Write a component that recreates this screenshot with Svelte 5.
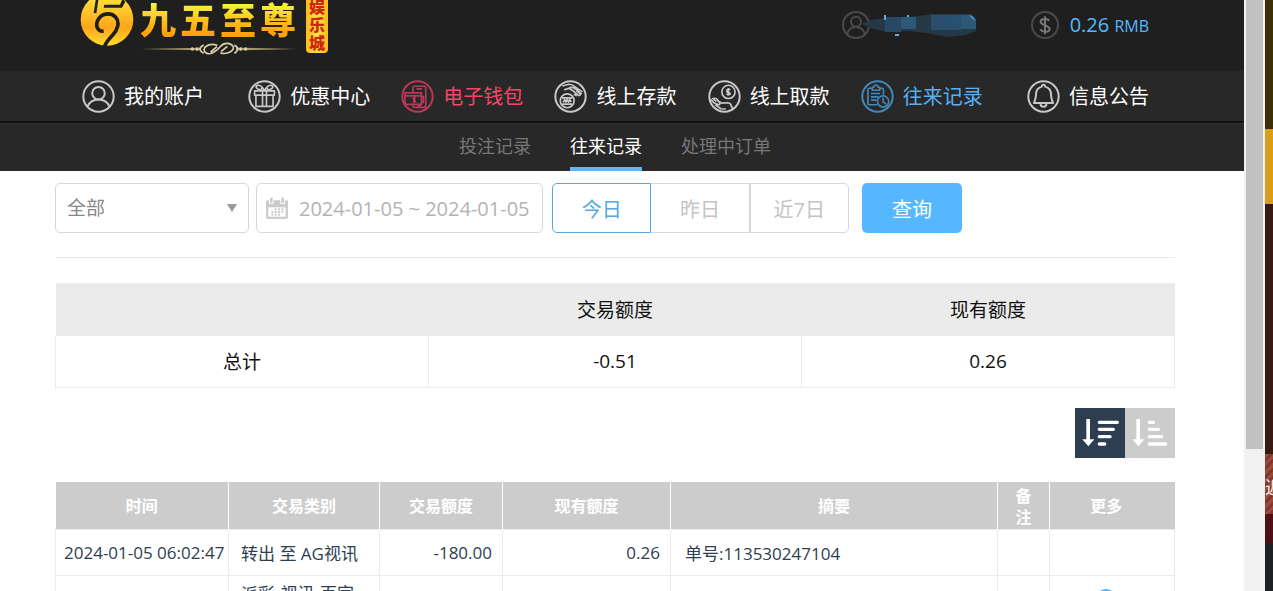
<script>
  const menu = [
    { icon: 'user', label: '我的账户' },
    { icon: 'gift', label: '优惠中心' },
    { icon: 'wallet', label: '电子钱包', tone: 'hot' },
    { icon: 'deposit', label: '线上存款' },
    { icon: 'withdraw', label: '线上取款' },
    { icon: 'records', label: '往来记录', tone: 'current' },
    { icon: 'bell', label: '信息公告' }
  ];
  const tabs = ['投注记录', '往来记录', '处理中订单'];
  const ranges = ['今日', '昨日', '近7日'];
  let tab = $state(1);
  let range = $state(0);
  let descending = $state(true);
  let period = $state('2024-01-05 ~ 2024-01-05');
</script>

{#snippet glyph(name)}
  <svg class="glyph" viewBox="0 0 100 100" aria-hidden="true">
    <circle cx="50" cy="50" r="46" />
    {#if name === 'user'}
      <circle cx="50" cy="40" r="19" />
      <path d="M16 81C23 65 34 59 50 59S77 65 84 81" />
    {:else if name === 'gift'}
      <g class="thin">
        <path d="M20 33H80V46H20ZM24 46V80H76V46M44 33V80M56 33V80M50 32C40 31 27 29 25 22S35 14 41 20 49 28 50 32C60 31 73 29 75 22S65 14 59 20 51 28 50 32M43 25L34 33M57 25L66 33" />
      </g>
    {:else if name === 'wallet'}
      <g class="thin">
        <path d="M36 38V24Q36 19 41 19H69Q75 19 75 25V77Q75 83 69 83H42Q36 83 36 77V74M47 27H64M12 39H62V74H17Q12 74 12 69ZM12 48H62M62 50H68V68H62" />
        <path d="M45 53Q36 52 37 57T42 62Q46 66 36 67M41 50V70M50 78H61" />
      </g>
    {:else if name === 'deposit'}
      <g class="thin">
        <path d="M25 18L45 13Q55 13 64 21L86 36M31 30L45 25 61 35 72 45Q78 50 80 43L68 32M60 43L69 48M45 25Q56 18 66 28L84 43" />
        <circle cx="40" cy="63" r="21" />
        <path d="M24 54H56M25 73H55M28 68L32 59 36 67 40 59 44 67 48 59 52 67" />
      </g>
    {:else if name === 'withdraw'}
      <g class="thin">
        <circle cx="62" cy="36" r="20" />
        <path d="M68 29Q56 26 57 33T62 37Q72 42 64 44 60 45 56 42M62 24V48M7 58L19 70 32 75Q38 75 35 68L27 60M13 55L25 65M18 56Q25 53 32 64L42 70 60 69Q70 70 70 78L76 88M22 75L39 87 54 88" />
      </g>
    {:else if name === 'records'}
      <g class="thin">
        <path d="M34 25H25Q21 25 21 30V71Q21 75 25 75H50M57 25H64Q68 25 68 30V45M34 22H39Q39 15 45 15T52 22H57V31H34ZM30 41H58M30 51H53M30 61H47" />
        <circle cx="67" cy="65" r="17" />
        <path d="M67 54V66L76 73" />
      </g>
    {:else}
      <path d="M50 14Q55 14 55 20C69 23 73 34 73 46 73 58 77 63 79 70H21C23 63 27 58 27 46 27 34 31 23 45 20Q45 14 50 14ZM41 71Q41 81 50 81T59 71" />
    {/if}
  </svg>
{/snippet}

<div class="shell">
  <div class="page">
    <header>
      <a class="logo" href="#home" aria-label="九五至尊娱乐城">
        <svg class="disc" viewBox="30 -22 162 158" aria-hidden="true">
          <defs>
            <linearGradient id="gold" x1="0" y1="0" x2="0" y2="1">
              <stop offset="0" stop-color="#ffe93c" />
              <stop offset=".65" stop-color="#ffa51a" />
              <stop offset="1" stop-color="#ffe02c" />
            </linearGradient>
          </defs>
          <circle cx="111" cy="57" r="79" fill="url(#gold)" />
          <path d="M84-20L75 38" fill="none" stroke="#1f1f1f" stroke-width="8" />
          <path d="M103 13H150L158-6L166 4L156 22H101Z" fill="#1f1f1f" />
          <path d="M101 92C83 94 75 76 84 58 94 39 120 34 136 49 151 65 143 88 127 105 116 117 108 125 104 138" fill="none" stroke="#1f1f1f" stroke-width="11" />
        </svg>
        <span class="wordmark">
          <span class="chars"><b>九</b><b>五</b><b>至</b><b>尊</b></span>
          <svg class="flourish" viewBox="0 0 465 40" aria-hidden="true">
            <path d="M0 20L180 16V24ZM465 20L285 16V24Z" fill="#a69a6b" />
            <g fill="none" stroke="#d8cfaa" stroke-width="5">
              <path d="M188 8Q166 20 188 33M280 8Q300 20 280 33M229 9C200 0 181 18 193 30S229 25 239 12 270 1 276 12 263 38 238 32M209 29L228 13M240 28L259 12" />
            </g>
            <g fill="#d8cfaa"><circle cx="154" cy="20" r="5" /><circle cx="168" cy="20" r="5" /><circle cx="299" cy="20" r="5" /><circle cx="314" cy="20" r="5" /></g>
          </svg>
        </span>
        <span class="seal"><b>娱</b><b>乐</b><b>城</b></span>
      </a>
      <div class="account">
        <svg class="small" viewBox="0 0 84 84" aria-hidden="true">
          <circle cx="42" cy="42" r="39" /><circle cx="42" cy="32" r="15" /><path d="M15 69Q22 48 42 48T69 69" />
        </svg>
        <svg class="mask" viewBox="0 0 106 28" aria-hidden="true">
          <path d="M-8 13L0 9 18 7 49 5 62 3H102L106 7V20L96 24 78 26 56 22 40 20 18 21 0 17Z" fill="#253845" />
          <path d="M15 6H31V21H15Z" fill="#284961" /><path d="M31 6H46V18H31Z" fill="#2e5878" />
          <path d="M61 4H76V19H61Z" fill="#2c4d6b" /><path d="M76 4H91V19H76Z" fill="#285070" /><path d="M91 4H100L106 9V18H91Z" fill="#2c5777" />
          <path d="M14 4H16V9H14ZM37 4H39V6H37ZM25 23H29V25H25ZM99 4Q104 5 105 10" fill="#5aaeea" />
        </svg>
        <svg class="small coin" viewBox="0 0 84 84" aria-hidden="true">
          <circle cx="42" cy="42" r="39" /><path class="dollar" d="M55 29C50 22 29 21 29 32S56 43 56 54 34 65 28 55M42 16V70" />
        </svg>
        <span class="balance">0.26 <small>RMB</small></span>
      </div>
    </header>

    <nav class="menu" aria-label="主菜单">
      {#each menu as item}
        <a class={item.tone} href="#{item.icon}">{@render glyph(item.icon)}<span>{item.label}</span></a>
      {/each}
    </nav>

    <nav class="tabs" aria-label="记录">
      {#each tabs as label, i}
        <button class:active={tab === i} onclick={() => (tab = i)}>{label}</button>
      {/each}
    </nav>

    <main>
      <form class="filters" onsubmit={(e) => e.preventDefault()}>
        <div class="field kind">
          <select aria-label="交易类别"><option>全部</option></select>
          <svg viewBox="0 0 10 8" aria-hidden="true"><path d="M0 0H10L5 8Z" fill="#999" /></svg>
        </div>
        <label class="field date">
          <svg viewBox="0 0 66 66" aria-hidden="true">
            <path d="M4 10H62Q66 10 66 14V26H0V14Q0 10 4 10ZM0 26H66V61Q66 66 61 66H5Q0 66 0 61Z" fill="#ccc" />
            <path d="M7 31H59V59H7Z" fill="#fff" />
            <path d="M9 0H23V20H9ZM43 0H57V20H43Z" fill="#fff" />
            <path d="M12 2H20V17H12ZM46 2H54V17H46Z" fill="#ccc" />
            <path d="M26 34h6v6h-6zM36 34h6v6h-6zM46 34h6v6h-6zM16 42h6v6h-6zM26 42h6v6h-6zM36 42h6v6h-6zM46 42h6v6h-6zM16 50h6v6h-6zM26 50h6v6h-6zM36 50h6v6h-6z" fill="#ccc" />
          </svg>
          <input type="text" aria-label="日期" bind:value={period} />
        </label>
        <div class="ranges">
          {#each ranges as label, i}
            <button type="button" class:active={range === i} onclick={() => (range = i)}>{label}</button>
          {/each}
        </div>
        <button class="query">查询</button>
      </form>

      <table class="summary">
        <thead><tr><th></th><th>交易额度</th><th>现有额度</th></tr></thead>
        <tbody><tr><td>总计</td><td>-0.51</td><td>0.26</td></tr></tbody>
      </table>

      <div class="sort">
        <button class:active={descending} aria-label="降序" onclick={() => (descending = true)}>
          <svg viewBox="0 0 150 150" aria-hidden="true"><path d="M34 33H45V94H58L40 115 22 94H34Z" /><path class="bars" d="M73 43H127M73 64H115M73 86H105M73 108H89" /></svg>
        </button>
        <button class:active={!descending} aria-label="升序" onclick={() => (descending = false)}>
          <svg viewBox="0 0 150 150" aria-hidden="true"><path d="M34 33H45V94H58L40 115 22 94H34Z" /><path class="bars" d="M73 43H85M73 64H100M73 86H110M73 108H122" /></svg>
        </button>
      </div>

      <table class="records">
        <colgroup><col class="w-time" /><col class="w-type" /><col class="w-amount" /><col class="w-balance" /><col /><col class="w-note" /><col class="w-more" /></colgroup>
        <thead>
          <tr><th>时间</th><th>交易类别</th><th>交易额度</th><th>现有额度</th><th>摘要</th><th>备<br />注</th><th class="more">更多</th></tr>
        </thead>
        <tbody>
          <tr><td class="time">2024-01-05 06:02:47</td><td class="type">转出 至 AG视讯</td><td class="num">-180.00</td><td class="num">0.26</td><td class="digest">单号:113530247104</td><td></td><td></td></tr>
          <tr class="next"><td></td><td class="type">派彩-视讯-百家</td><td></td><td></td><td></td><td></td>
            <td class="more"><svg viewBox="0 0 20 20" aria-hidden="true"><circle cx="10" cy="10" r="9" fill="none" stroke="#55b8ff" stroke-width="2" /></svg></td></tr>
        </tbody>
      </table>
    </main>
  </div>
  <div class="scrollbar"><div class="thumb"></div></div>
  <aside><div class="olive"></div><div class="amber"></div><div class="brown"></div><div class="ribbon">返</div><div class="wine"></div></aside>
</div>

<style>
  :global(body) { margin: 0; overflow: hidden; }
  .shell { display: flex; height: 100vh; overflow: hidden; background: #fff; font-family: "Open Sans", "Noto Sans CJK SC", sans-serif; font-size: 16px; }
  .shell * { box-sizing: border-box; }
  button, input, select { font: inherit; margin: 0; padding: 0; border: 0; background: none; }
  button { cursor: pointer; }
  svg { display: block; flex: none; }
  a { text-decoration: none; color: inherit; }
  .page { flex: 1; min-width: 0; overflow: hidden; }

  header { display: flex; justify-content: space-between; align-items: flex-end; height: 71px; padding: 0 95px 0 80px; overflow: hidden; background: #1f1f1f; }
  .logo { display: flex; align-items: flex-end; padding-bottom: 15px; }
  .disc { width: 54px; height: 53px; margin-bottom: 10px; }
  .wordmark { display: flex; flex-direction: column; align-items: center; margin-left: 6px; }
  .chars { display: flex; gap: 4px; font-family: "Noto Sans CJK SC", sans-serif; font-size: 36px; line-height: 48px; }
  .chars b { font-weight: 900; color: transparent; background: linear-gradient(#f4f53a 20%, #ffb414 65%, #ff9f10 85%); -webkit-background-clip: text; background-clip: text; }
  .flourish { width: 155px; height: 14px; }
  .seal { display: flex; flex-direction: column; width: 22px; margin: 0 0 3px 10px; padding: 2px; border-radius: 4px; background: linear-gradient(90deg, #ffb81c, #ffe640 50%, #ffb81c); color: #cf2410; font: 900 16px/18px "Noto Sans CJK SC", sans-serif; text-align: center; }
  .account { display: flex; align-items: center; align-self: flex-start; height: 49px; color: #55b8ff; }
  .small { width: 28px; height: 28px; fill: none; stroke: #4a4a4a; stroke-width: 6; }
  .dollar { stroke: #777; }
  .mask { width: 106px; height: 28px; overflow: visible; }
  .coin { margin: 0 11px 0 55px; }
  .balance { font-size: 20px; }
  .balance small { font-size: 16px; }

  .menu { display: flex; justify-content: space-between; align-items: center; height: 52px; padding: 0 95px 0 82px; background: #282828; border-bottom: 2px solid #111; color: #fff; font-size: 20px; }
  .menu a { display: flex; align-items: center; gap: 9px; line-height: 30px; }
  .menu a:first-child { margin-right: 13px; }
  .menu a:last-child { margin-left: 13px; }
  .menu span { padding-top: 2px; }
  .glyph { width: 33px; height: 33px; fill: none; stroke: #c8c8c8; stroke-width: 6; stroke-linejoin: round; }
  .thin { stroke-width: 5; }
  .menu .hot { color: #fb4368; }
  .hot .glyph { stroke: #b8395a; }
  .menu .current { color: #55b0f5; }
  .current .glyph { stroke: #4288bb; }

  .tabs { display: flex; justify-content: center; gap: 39px; height: 48px; padding: 0 69px 0 55px; background: #282828; border-top: 1px solid #333; }
  .tabs button { border-bottom: 4px solid transparent; color: #777; font-size: 18px; line-height: 40px; }
  .tabs .active { color: #fff; border-color: #63b6f5; }

  main { padding: 12px 69px 0 55px; }
  .filters { display: flex; height: 75px; border-bottom: 1px solid #e8e8e8; font-size: 20px; }
  .filters > * { height: 50px; }
  .field { display: flex; align-items: center; border: 1px solid #d8d8d8; border-radius: 5px; color: #aaa; }
  .kind { width: 194px; margin-right: 7px; padding: 0 11px; color: #888; font-size: 19px; }
  .kind select { flex: 1; height: 48px; appearance: none; color: inherit; }
  .kind svg { width: 10px; height: 8px; }
  .date { width: 287px; margin-right: 9px; padding: 0 9px; gap: 11px; }
  .date svg { width: 22px; height: 22px; }
  .date input { flex: 1; min-width: 0; width: 0; color: #b3b3b3; }
  .ranges { display: flex; width: 297px; margin-right: 13px; }
  .ranges button { flex: 1; border: 1px solid #d8d8d8; color: #c4c4c4; }
  .ranges button + button { border-left-width: 0; }
  .ranges button:last-child { border-left-width: 1px; border-radius: 0 5px 5px 0; }
  .ranges button:first-child { border-radius: 5px 0 0 5px; }
  .ranges .active { border-color: #55a9e0; color: #55a9e0; }
  .query { width: 100px; border-radius: 5px; background: #55b8ff; color: #fff; }

  table { width: 100%; border-collapse: collapse; table-layout: fixed; }
  .summary { margin-top: 25px; font-size: 19px; text-align: center; color: #111; }
  .summary th { height: 52px; padding: 0; background: #ebebeb; font-weight: 400; }
  .summary td { height: 52px; padding: 0; border: 1px solid #ebebeb; }

  .sort { display: flex; justify-content: flex-end; margin: 20px 0 24px; }
  .sort button { width: 50px; height: 50px; background: #ccc; }
  .sort .active { background: #2d3e50; }
  .sort svg { width: 50px; height: 50px; fill: #fff; }
  .bars { stroke: #fff; stroke-width: 10; stroke-linecap: round; }

  .w-time { width: 173px; }
  .w-type { width: 151px; }
  .w-amount { width: 123px; }
  .w-balance { width: 168px; }
  .w-note { width: 52px; }
  .w-more { width: 125px; }
  .records { color: #2d3e50; }
  .records th { height: 48px; padding: 3px 0 0; background: #ccc; color: #fff; font-weight: 700; line-height: 21px; }
  .records th + th { border-left: 1px solid #fff; }
  .records td { height: 46px; padding: 0; border: 1px solid #ebebeb; font-size: 17px; white-space: nowrap; }
  .records .time { padding-left: 8px; }
  .records .type { padding-left: 12px; }
  .records .num { padding-right: 10px; text-align: right; }
  .records .digest { padding-left: 14px; }
  .next td { vertical-align: top; }
  .records .next .type { padding-top: 4px; }
  .records .more { padding-right: 12px; }
  .records td.more { padding-top: 13px; }
  .more svg { width: 20px; height: 20px; margin: 0 auto; }

  .scrollbar { width: 21px; flex: none; padding: 0 2px; background: #f1f1f1; }
  .thumb { height: 76%; background: #c1c1c1; }
  aside { display: flex; flex-direction: column; width: 8px; flex: none; overflow: hidden; background: #1e2024; }
  .olive { height: 129px; background: #402e06; }
  .amber { height: 75px; background: #d8a018; }
  .brown { height: 250px; background: #371b10; }
  .ribbon { height: 60px; background: repeating-linear-gradient(135deg, #9a4a3b 0 3px, #7e392c 3px 6px); color: #f3e6e0; font-size: 18px; line-height: 66px; white-space: nowrap; }
  .wine { height: 29px; background: #4e1014; }
</style>
